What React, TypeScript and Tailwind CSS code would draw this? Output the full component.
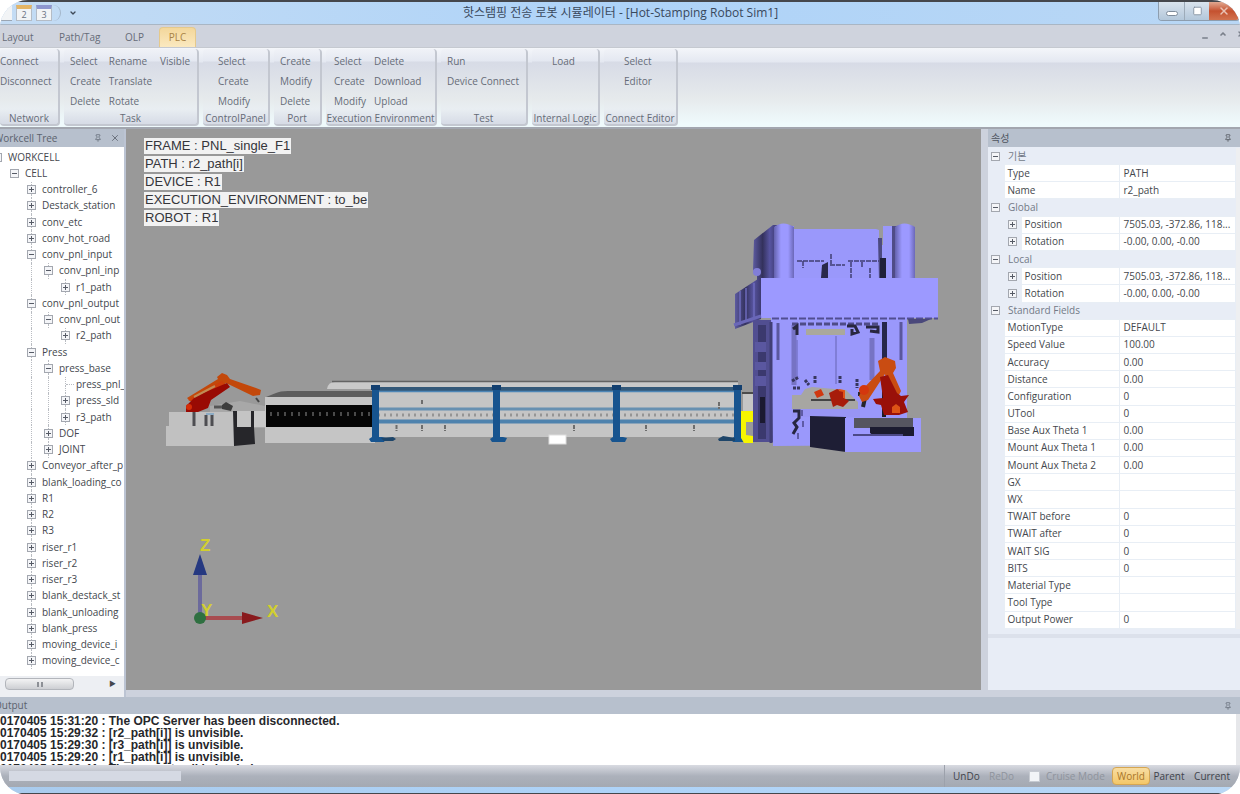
import { Pin, X, Minus, Square, ChevronDown, ChevronUp } from 'lucide-react';

interface RibbonGroupData {
  title: string;
  width: string;
  columns: string[][];
}

interface TreeNode {
  label: string;
  depth: number;
  open?: boolean;
  leaf?: boolean;
  lines?: number[];
}

interface PropertyRow {
  name: string;
  value?: string;
  kind?: 'group' | 'nested';
}

const tabs = ['Layout', 'Path/Tag', 'OLP', 'PLC'];

const ribbonGroups: RibbonGroupData[] = [
  { title: 'Network', width: 'w-[60px] pl-0', columns: [['Connect', 'Disconnect']] },
  {
    title: 'Task',
    width: 'w-[135px] pl-[6px]',
    columns: [['Select', 'Create', 'Delete'], ['Rename', 'Translate', 'Rotate'], ['Visible']],
  },
  { title: 'ControlPanel', width: 'w-[67px] pl-[15px]', columns: [['Select', 'Create', 'Modify']] },
  { title: 'Port', width: 'w-[48px] pl-[6px]', columns: [['Create', 'Modify', 'Delete']] },
  {
    title: 'Execution Environment',
    width: 'w-[111px] pl-[8px]',
    columns: [['Select', 'Create', 'Modify'], ['Delete', 'Download', 'Upload']],
  },
  { title: 'Test', width: 'w-[87px] pl-[6px]', columns: [['Run', 'Device Connect']] },
  { title: 'Internal Logic', width: 'w-[68px] pl-[20px]', columns: [['Load']] },
  { title: 'Connect Editor', width: 'w-[74px] pl-[20px]', columns: [['Select', 'Editor']] },
];

const tree: TreeNode[] = [
  { label: 'WORKCELL', depth: 0, open: true },
  { label: 'CELL', depth: 1, open: true },
  { label: 'controller_6', depth: 2 },
  { label: 'Destack_station', depth: 2 },
  { label: 'conv_etc', depth: 2 },
  { label: 'conv_hot_road', depth: 2 },
  { label: 'conv_pnl_input', depth: 2, open: true },
  { label: 'conv_pnl_inp', depth: 3, open: true, lines: [2] },
  { label: 'r1_path', depth: 4, lines: [2] },
  { label: 'conv_pnl_output', depth: 2, open: true },
  { label: 'conv_pnl_out', depth: 3, open: true, lines: [2] },
  { label: 'r2_path', depth: 4, lines: [2] },
  { label: 'Press', depth: 2, open: true },
  { label: 'press_base', depth: 3, open: true, lines: [2] },
  { label: 'press_pnl_', depth: 4, leaf: true, lines: [2, 3] },
  { label: 'press_sld', depth: 4, lines: [2, 3] },
  { label: 'r3_path', depth: 4, lines: [2, 3] },
  { label: 'DOF', depth: 3, lines: [2] },
  { label: 'JOINT', depth: 3, lines: [2] },
  { label: 'Conveyor_after_p', depth: 2 },
  { label: 'blank_loading_co', depth: 2 },
  { label: 'R1', depth: 2 },
  { label: 'R2', depth: 2 },
  { label: 'R3', depth: 2 },
  { label: 'riser_r1', depth: 2 },
  { label: 'riser_r2', depth: 2 },
  { label: 'riser_r3', depth: 2 },
  { label: 'blank_destack_st', depth: 2 },
  { label: 'blank_unloading', depth: 2 },
  { label: 'blank_press', depth: 2 },
  { label: 'moving_device_i', depth: 2 },
  { label: 'moving_device_c', depth: 2 },
];

const properties: PropertyRow[] = [
  { name: '기본', kind: 'group' },
  { name: 'Type', value: 'PATH' },
  { name: 'Name', value: 'r2_path' },
  { name: 'Global', kind: 'group' },
  { name: 'Position', value: '7505.03, -372.86, 118...', kind: 'nested' },
  { name: 'Rotation', value: '-0.00, 0.00, -0.00', kind: 'nested' },
  { name: 'Local', kind: 'group' },
  { name: 'Position', value: '7505.03, -372.86, 118...', kind: 'nested' },
  { name: 'Rotation', value: '-0.00, 0.00, -0.00', kind: 'nested' },
  { name: 'Standard Fields', kind: 'group' },
  { name: 'MotionType', value: 'DEFAULT' },
  { name: 'Speed Value', value: '100.00' },
  { name: 'Accuracy', value: '0.00' },
  { name: 'Distance', value: '0.00' },
  { name: 'Configuration', value: '0' },
  { name: 'UTool', value: '0' },
  { name: 'Base Aux Theta 1', value: '0.00' },
  { name: 'Mount Aux Theta 1', value: '0.00' },
  { name: 'Mount Aux Theta 2', value: '0.00' },
  { name: 'GX' },
  { name: 'WX' },
  { name: 'TWAIT before', value: '0' },
  { name: 'TWAIT after', value: '0' },
  { name: 'WAIT SIG', value: '0' },
  { name: 'BITS', value: '0' },
  { name: 'Material Type' },
  { name: 'Tool Type' },
  { name: 'Output Power', value: '0' },
];

const overlayLabels = [
  'FRAME : PNL_single_F1',
  'PATH : r2_path[i]',
  'DEVICE : R1',
  'EXECUTION_ENVIRONMENT : to_be',
  'ROBOT : R1',
];

const logLines = [
  '0170405 15:31:20 : The OPC Server has been disconnected.',
  '0170405 15:29:32 : [r2_path[i]] is unvisible.',
  '0170405 15:29:30 : [r3_path[i]] is unvisible.',
  '0170405 15:29:20 : [r1_path[i]] is unvisible.',
  '0170405 15:28:41 : The current cell is loaded.',
];

function ExpandBox({ open }: { open?: boolean }) {
  return (
    <svg viewBox="0 0 9 9" className="w-[9px] h-[9px]" shapeRendering="crispEdges">
      <rect x="0.5" y="0.5" width="8" height="8" fill="#f4f5f8" stroke="#a3a7af" />
      <path d={open ? 'M2 4.5h5' : 'M2 4.5h5M4.5 2v5'} stroke="#565b66" />
    </svg>
  );
}

function TitleBar() {
  return (
    <header className="relative flex h-[25px] shrink-0 items-center border-t-2 border-[#45474c] bg-gradient-to-r from-[#c4dcf4] via-[#aed3f8] to-[#b9d7f5] border-b border-b-[#a9b6c4]">
      <div className="flex items-center gap-1 rounded-r-full border-r border-[#a3b6ca] pr-2">
        <button aria-label="New" className="h-4 w-3 border-b border-[#9ba6b3] bg-[#f2f4f6]" />
        <button aria-label="Open" className="h-4 w-4 border border-t-4 border-[#b4bcc6] border-t-[#e4b566] bg-[#f2f4f6] text-[9px] leading-[10px] text-gray-500">2</button>
        <button aria-label="Save" className="h-4 w-4 border border-t-4 border-[#b4bcc6] border-t-[#8d96cf] bg-[#f2f4f6] text-[9px] leading-[10px] text-gray-500">3</button>
      </div>
      <button aria-label="Customize" className="ml-2">
        <ChevronDown className="h-2 w-2 text-[#3f4a58]" strokeWidth={4} />
      </button>
      <h1 className="flex-1 pl-[6px] text-center text-[12px] leading-[16px] text-[#39485c]">
        핫스탬핑 전송 로봇 시뮬레이터 - [Hot-Stamping Robot Sim1]
      </h1>
      <div className="flex h-[19px] self-start overflow-hidden rounded-b border border-t-0 border-[#8d9dae]">
        <button aria-label="Minimize" className="flex w-[26px] items-center justify-center border-r border-[#9dabb9] bg-gradient-to-b from-[#d9e3ed] to-[#b3c7da]">
          <span className="mt-1 h-[5px] w-[12px] rounded-sm border border-[#7e8c9b] bg-white" />
        </button>
        <button aria-label="Restore" className="flex w-[24px] items-center justify-center bg-gradient-to-b from-[#d9e3ed] to-[#b3c7da]">
          <Square className="h-[10px] w-[11px] fill-white text-[#7e8c9b]" />
        </button>
        <button aria-label="Close" className="flex w-[30px] items-center justify-center bg-gradient-to-b from-[#e0a891] via-[#c4512f] to-[#d2724f]">
          <X className="h-3 w-3 text-[#e9c2b4]" strokeWidth={3} />
        </button>
      </div>
    </header>
  );
}

function TabBar() {
  return (
    <nav className="flex h-[23px] shrink-0 items-end justify-between border-b border-[#c5c9d0] bg-[#cfd3dd] pl-[2px] text-[10px] text-[#666c78]">
      <div className="flex h-[20px]">
        {tabs.map((tab) => (
          <button
            key={tab}
            className={
              tab === 'PLC'
                ? 'w-[37px] rounded-t border border-b-0 border-[#e5c98c] bg-gradient-to-b from-[#f3d79b] to-[#fbe9c0] text-[#a98345]'
                : tab === 'Layout'
                  ? 'w-[57px] text-left'
                  : tab === 'Path/Tag'
                    ? 'w-[66px] text-left'
                    : 'w-[34px] text-left'
            }
          >
            {tab}
          </button>
        ))}
      </div>
      <div className="-mr-[5px] flex gap-2 self-center text-[#7a808b]">
        <Minus className="mt-1 h-2 w-2" strokeWidth={4} />
        <ChevronUp className="h-2 w-3" strokeWidth={5} />
        <X className="h-2 w-2" strokeWidth={4} />
      </div>
    </nav>
  );
}

function Ribbon() {
  return (
    <div className="flex h-[81px] shrink-0 gap-[4px] overflow-hidden border-b-2 border-[#a2a6af] bg-[linear-gradient(#f4f6fa_0,#e4e8f1_14px,#d7dbe6_15px,#e6eaec_50px,#effafc_76px)] pt-[1px] text-[10px] leading-[20px] text-[#666c78]">
      {ribbonGroups.map((group) => (
        <section
          key={group.title}
          className={`${group.width} relative flex h-[77px] shrink-0 flex-col rounded-sm border-r-2 border-b-2 border-[#c3c7d0] bg-[linear-gradient(#f0f2f7_0,#e4e8f1_12px,#d7dbe6_13px,#e6eaec_50px,#e9eef2_60px,#d5dae5_76px)]`}
        >
          <div className="flex h-[61px] gap-2 pt-[2px]">
            {group.columns.map((column) => (
              <div key={column[0]} className="flex flex-col items-start">
                {column.map((item) => (
                  <button key={item} className="h-[20px] whitespace-nowrap">{item}</button>
                ))}
              </div>
            ))}
          </div>
          <h2 className="absolute inset-x-0 bottom-0 h-[14px] whitespace-nowrap text-center leading-[16px]">{group.title}</h2>
        </section>
      ))}
    </div>
  );
}

function WorkcellTree() {
  return (
    <aside className="flex w-[126px] shrink-0 flex-col overflow-hidden border-r-2 border-[#bcc4d3] bg-white text-[10px] text-[#44474d]">
      <div className="flex h-[18px] shrink-0 items-center bg-[#b7c0cd] text-[#5b626e]">
        <h2 className="-ml-[6px] flex-1 whitespace-nowrap">Workcell Tree</h2>
        <button aria-label="Pin tree" className="mr-2"><Pin className="h-2 w-2" /></button>
        <button aria-label="Close tree" className="mr-1"><X className="h-[10px] w-[10px]" /></button>
      </div>
      <ul className="-ml-[11px] grid flex-1 auto-rows-fr pt-[2px]">
        {tree.map((node) => (
          <li key={node.label} className="flex items-stretch">
            {Array.from({ length: node.depth }, (_, level) => (
              <span key={level} className="flex w-[17px] shrink-0 justify-center">
                {node.lines?.includes(level) && <span className="border-l border-dotted border-[#b9bcc2]" />}
              </span>
            ))}
            <span className="flex w-[17px] shrink-0 flex-col items-center">
              <span className={node.depth < 2 ? 'flex-1' : 'flex-1 border-l border-dotted border-[#b9bcc2]'} />
              {node.leaf ? (
                <span className="w-2 self-end border-t border-dotted border-[#b9bcc2]" />
              ) : (
                <button aria-label={`Toggle ${node.label}`}><ExpandBox open={node.open} /></button>
              )}
              <span className={node.depth < 2 ? 'flex-1' : 'flex-1 border-l border-dotted border-[#b9bcc2]'} />
            </span>
            <span className="self-center whitespace-nowrap pl-[2px] leading-[15px]">{node.label}</span>
          </li>
        ))}
      </ul>
      <div className="mt-[7px] flex h-[21px] shrink-0 items-start bg-[#edeff3] pl-[5px]">
        <div className="mt-[2px] flex h-[12px] w-[69px] items-center justify-center rounded-sm border border-[#b2b5bb] bg-gradient-to-b from-[#f3f3f4] to-[#cdcfd3]">
          <span className="h-[5px] w-[6px] border-x-2 border-[#8d9096]" />
        </div>
        <span className="ml-auto mr-2 text-[7px] leading-[15px]">▶</span>
      </div>
    </aside>
  );
}

function FencePost({ x }: { x: number }) {
  return (
    <g fill="#17548f">
      <rect x={x - 3} y="386" width="7" height="55" />
      <rect x={x - 4} y="385" width="9" height="5" fill="#123f70" />
      <path d={`M${x - 6} 439l3-2h10l4 1-2 4h-13z`} />
    </g>
  );
}

function Scene() {
  return (
    <svg viewBox="126 129 855 561" className="block h-full w-full" role="img" aria-label="Robot cell">
      <defs>
        <linearGradient id="cylinder">
          <stop offset="0" stopColor="#6462ad" />
          <stop offset="0.35" stopColor="#9c99ff" />
          <stop offset="0.7" stopColor="#9c99ff" />
          <stop offset="1" stopColor="#6b68b8" />
        </linearGradient>
        <linearGradient id="side">
          <stop offset="0" stopColor="#5c5aa0" />
          <stop offset="0.4" stopColor="#33315c" />
          <stop offset="0.7" stopColor="#5754a0" />
          <stop offset="1" stopColor="#3d3a70" />
        </linearGradient>
      </defs>

      {/* conveyor line */}
      <path d="M327 389q1-7 8-7h403v8z" fill="#c9c9c9" />
      <path d="M332 381.500h406" stroke="#636363" strokeWidth="1.500" />
      <path d="M266 397l10-4q4-2 12-2h87v7z" fill="#5d5d5d" />
      <rect x="265" y="397" width="110" height="46" fill="#c5c5c5" />
      <rect x="266" y="405" width="109" height="22" fill="#060606" />
      <path d="M270 414h103" stroke="#4a4a4a" strokeWidth="4" strokeDasharray="2 5" />
      <rect x="375" y="391" width="363" height="46" fill="#c5c5c5" />
      <path d="M378 389h360" stroke="#345979" strokeWidth="4" />
      <path d="M378 391.500h360" stroke="#4e86b6" strokeWidth="1.500" />
      <path d="M378 409h360" stroke="#6790b1" strokeWidth="3" />
      <path d="M378 415h358" stroke="#959595" strokeWidth="3" strokeDasharray="2 4" />
      <path d="M378 421.500h360" stroke="#4e82ad" strokeWidth="4" />
      <path d="M396.500 425v6M422 425v6M445 425v6M574 425v6M646 425v6M694 425v6M422 400v5M719 402v7" stroke="#6d6d6d" strokeWidth="2" strokeDasharray="4 1" />
      <FencePost x={375} />
      <FencePost x={496} />
      <FencePost x={616} />
      <FencePost x={737} />
      <path d="M381 438l12-1 3 2-3 2h-9zM718 439l5-3 12 2v3h-16z" fill="#1e4569" />
      <rect x="549" y="435" width="17" height="9" fill="#fff" stroke="#ddd" />
      <rect x="743" y="393" width="10" height="19" fill="#c5c5c5" />
      <path d="M742 393h12" stroke="#4c4c4c" strokeWidth="2" />

      {/* left robot and its base */}
      <path d="M169 412h65v14h-2v20h-66v-20h3z" fill="#c1c1c1" />
      <path d="M210 406l30-5 25 5v22h-32l-23-16z" fill="#a8a8a8" />
      <path d="M210 412h24v34h-24z" fill="#c1c1c1" />
      <path d="M234 411h31v16h-31z" fill="#c9c9c9" />
      <path d="M233 411h4v16h14v-16h3v16l1 17-21 2z" fill="#26262a" />
      <path d="M237 411h14v16h-14z" fill="#c4c4c4" />
      <path d="M194 411v15M206 415v11M212 415v11" stroke="#4e4e52" strokeWidth="3" />
      <path d="M206 414h8" stroke="#8cabc4" strokeWidth="2" />
      <path d="M222 405l4-3 7 4-2 5-9-2z" fill="#3d3d3d" />
      <path d="M214 407h8" stroke="#555" strokeWidth="3" />
      <path d="M218 379l-1-2 5-4 5 2 3 4 26 9 5 2-1 5-7 1-27-13-5 4-31 14-3-3z" fill="#c3480a" />
      <path d="M188 400l34-19 5 6-30 17z" fill="#cc3e0b" />
      <path d="M186 406l10-10 31-13 3 4-19 13-3 8-10 4h-12z" fill="#990a03" />
      <path d="M194 397l21-11" stroke="#c08b55" strokeWidth="2" />
      <circle cx="189" cy="407" r="3" fill="#d52c07" />
      <path d="M256 398l3 4" stroke="#444" strokeWidth="2" />

      {/* press */}
      <path d="M754 240l19-15h4v55h-20v-7l-4-3z" fill="url(#side)" />
      <circle cx="757" cy="272" r="4" fill="#817ed8" />
      <rect x="775" y="226" width="127" height="54" fill="#9a98fb" />
      <path d="M876 225h7v20h-4v-15l-3-1z" fill="#9a9a9a" />
      <path d="M794 225h84v4h-84z" fill="#999" />
      <path d="M878 238h4v20h4v22h-7z" fill="#4c4a80" />
      <path d="M892 226h5v54h-5z" fill="#4f4c87" />
      <path d="M774 227q9-7 20 0v53h-20z" fill="url(#cylinder)" />
      <path d="M895 227q9-7 20 0v53h-20z" fill="url(#cylinder)" />
      <path d="M797 261h27M830 265h15M848 261h31M851 262v16M831 254v10M803 261v7M862 262v6M870 268v10" stroke="#403e73" strokeWidth="1.500" strokeDasharray="5 1" fill="none" />
      <path d="M822 265l6-3v16h-7z" fill="#2a294b" />
      <path d="M880 258h6v20h-6z" fill="#20203a" />
      <path d="M735 294l26-17v42l-26 10z" fill="url(#side)" />
      <path d="M740 291v34M746 288v34M754 283v35" stroke="#6e6bbd" strokeWidth="1.500" />
      <rect x="753" y="320" width="21" height="122" fill="#514e91" />
      <path d="M758 325h8v114h-8z" fill="#3b396e" />
      <path d="M755 342h11v10h-11zM755 362h11v8h-11zM755 376h11v10h-11z" fill="#5a57a0" />
      <path d="M760 397h5v26h-5z" fill="#1b1a30" />
      <path d="M771 317h136v128l-134 1z" fill="#9a98fb" />
      <path d="M771 322v121" stroke="#413e75" strokeWidth="3" />
      <path d="M778 323v37M901 322v38" stroke="#5a579d" strokeWidth="3" />
      <path d="M794 325v60M872 338v42" stroke="#7673c4" strokeWidth="5" />
      <path d="M797 340v40M836 336v48" stroke="#7875cc" strokeWidth="1.500" />
      <path d="M792 324h87" stroke="#4e4b87" strokeWidth="3" strokeDasharray="6 2" />
      <path d="M793 329l4-3v9M847 326h8l3 6-6 2v-5M866 327h12v5l-8-1" fill="none" stroke="#28273f" strokeWidth="3" />
      <path d="M806 329h39v6h-39z" fill="#aaa89c" />
      <path d="M882 322h5v47h-5z" fill="#26264a" />
      <path d="M792 381l7-4M793 388h7M805 380l4 5M815 376v7M840 376v7M857 379v9" stroke="#37365e" strokeWidth="3" strokeDasharray="3 1" />
      <path d="M792 395h9l4-6 7-2 34 3 12 12v7h-66z" fill="#a7a6a2" />
      <path d="M811 400h44" stroke="#444" strokeWidth="2" />
      <path d="M814 392l7-3 3 6-7 3z" fill="#d03810" />
      <path d="M829 393l8-4 7 2v7l5 3-6 6-6-2-4 2z" fill="#a71c0b" />
      <path d="M839 390l5 1v7" stroke="#e15319" strokeWidth="2" fill="none" />
      <path d="M792 409h68v8h-68z" fill="#9895f5" />
      <path d="M793 411h6v7l-5 5 3 4-4 7" stroke="#262641" strokeWidth="3" fill="none" />
      <path d="M802 410v6M803 421v6M798 439v-6" stroke="#5e5ba6" strokeWidth="2" />
      <rect x="761" y="278" width="177" height="40" fill="#9c99ff" />
      <path d="M772 318.500h166" stroke="#514e91" strokeWidth="2" strokeDasharray="7 2" />
      <path d="M908 319h23l-9 4-13 1z" fill="#4a487b" />
      <path d="M734 325l27-9" stroke="#6a67b8" strokeWidth="3" />

      {/* yellow gate */}
      <path d="M741 411h12v11h-7v13l7 1v7h-9l-3-5z" fill="#f6f500" />

      {/* right base */}
      <path d="M810 416l36 1v35l-36-5z" fill="#1e1e35" />
      <path d="M845 418h76v34h-76z" fill="#9c99ff" />
      <path d="M854 418h59v10h-59z" fill="#555560" />
      <path d="M870 427h44v9h-40l-4-3z" fill="#1b1b30" />
      <path d="M853 435h50" stroke="#4c4987" strokeWidth="2" />

      {/* right robot */}
      <path d="M884 383v34" stroke="#1c1c26" strokeWidth="4" />
      <path d="M862 396l3 2-2 9M858 394h6" stroke="#26262c" strokeWidth="4" fill="none" />
      <path d="M880 371l-2-10 7-4 10 4 1 7-3 5 8 18-4 8-7 2-5-27-17 26-6 2-3-6 3-6z" fill="#c94c12" />
      <path d="M880 377l8-2 9 18 4 3 8-1-5 7 4 10-9 3h-15l-3-10-5-1-3-5 10-1z" fill="#991009" />
      <path d="M892 407l4-3 4 3v6h-8z" fill="#dd5316" />
      <circle cx="864" cy="390" r="5" fill="#d4370e" />

      {/* axis triad */}
      <g fontFamily="Liberation Sans, sans-serif" fontSize="17" fontWeight="bold" fill="#d2cf2e">
        <path d="M200 614v-39" stroke="#6c6a9c" strokeWidth="4" />
        <path d="M200 554l7 21h-14z" fill="#263981" />
        <path d="M204 618h40" stroke="#a84c50" strokeWidth="4" />
        <path d="M263 618l-21-6v12z" fill="#891a1d" />
        <circle cx="200" cy="618" r="6" fill="#2f7041" />
        <text x="200" y="551">Z</text>
        <text x="201" y="616">Y</text>
        <text x="267" y="617">X</text>
      </g>
    </svg>
  );
}

function Viewport() {
  return (
    <main className="relative min-w-0 flex-1 bg-[#999]">
      <Scene />
      <div className="absolute left-[18px] top-[9px] flex flex-col items-start gap-[2px] font-['Liberation_Sans',sans-serif] text-[13px] text-[#35353a]">
        {overlayLabels.map((label) => (
          <span key={label} className="bg-[#f2f2f2] px-[1px] leading-[16px]">{label}</span>
        ))}
      </div>
    </main>
  );
}

function PropertiesPanel() {
  return (
    <aside className="flex w-[259px] shrink-0 flex-col border-l-[7px] border-[#cdd2dd] bg-[#e8edf6] text-[10px] text-[#44474d]">
      <div className="flex h-[18px] shrink-0 items-center bg-[#b7c0cd] pl-[3px]">
        <h2 className="flex-1 text-[#4d535e]">속성</h2>
        <Pin className="mr-2 h-2 w-2" />
      </div>
      <div className="flex border-b-4 border-[#dce1eb] pt-[1px] pb-[5px]">
        <table className="h-[481px] flex-1 table-fixed border-collapse">
          <colgroup>
            <col className="w-[16px]" />
            <col className="w-[17px]" />
            <col className="w-[98px]" />
            <col />
          </colgroup>
          <tbody>
            {properties.map((row, index) => (
              <tr key={index} className="leading-[15px]">
                {row.kind === 'group' ? (
                  <>
                    <td className="p-0 pl-[3px]">
                      <button aria-label={`Toggle ${row.name}`} className="block"><ExpandBox open /></button>
                    </td>
                    <th colSpan={3} className="p-0 pl-[4px] text-left font-normal text-[#737a87]">{row.name}</th>
                  </>
                ) : (
                  <>
                    <td className="p-0" />
                    {row.kind === 'nested' && (
                      <td className="p-0 pl-[4px]">
                        <button aria-label={`Expand ${row.name}`} className="block"><ExpandBox /></button>
                      </td>
                    )}
                    <th
                      colSpan={row.kind === 'nested' ? 1 : 2}
                      className="whitespace-nowrap border border-[#e8eef5] bg-white p-0 pl-[3px] text-left font-normal"
                    >
                      {row.name}
                    </th>
                    <td className="whitespace-nowrap border border-[#e8eef5] bg-white p-0 pl-[4px]">{row.value}</td>
                  </>
                )}
              </tr>
            ))}
          </tbody>
        </table>
        <div className="w-[4px] shrink-0 bg-[#eeeff1]" />
      </div>
      <div className="flex-1 border-b-[7px] border-[#cdd2dd]" />
    </aside>
  );
}

function OutputPanel() {
  return (
    <section className="shrink-0">
      <div className="flex h-[17px] items-center bg-[#b7c0cd] text-[10px] text-[#5b626e]">
        <h2 className="-ml-[6px] flex-1">Output</h2>
        <Pin className="mr-2 h-2 w-2" />
      </div>
      <div className="flex h-[51px] overflow-hidden bg-white">
        <div className="flex-1 pt-[1px] font-['Liberation_Sans',sans-serif] text-[12px] leading-[12px] font-bold text-[#26272b]">
          {logLines.map((line) => (
            <p key={line}>{line}</p>
          ))}
        </div>
        <div className="w-[4px] bg-[#e6e7ea]" />
      </div>
    </section>
  );
}

function StatusBar() {
  return (
    <footer className="flex h-[22px] shrink-0 items-center bg-gradient-to-b from-[#d9dbe2] via-[#acb1bb] to-[#a4a9b2] pl-[9px] pr-[10px] text-[10px] text-[#3f434b]">
      <div className="h-[10px] w-[172px] bg-[#d5d9e3]" />
      <div className="ml-auto flex h-full items-center border-l border-[#9ca1ab] pl-2">
        <button className="w-[36px] text-left">UnDo</button>
        <button className="w-[40px] text-left text-[#8f949d]" disabled>ReDo</button>
        <label className="flex w-[83px] items-center gap-[6px] whitespace-nowrap text-[#8f949d]">
          <input type="checkbox" defaultChecked disabled className="h-[11px] w-[11px] appearance-none border border-[#c6cad1] bg-[#f2f4f7]" />
          Cruise Mode
        </label>
        <button className="h-[18px] w-[38px] rounded-sm border border-[#d5a653] bg-gradient-to-b from-[#f8dda2] to-[#f3c768] text-[#a8762b]">World</button>
        <button className="w-[38px]">Parent</button>
        <button className="w-[42px] text-right">Current</button>
      </div>
    </footer>
  );
}

export default function App() {
  return (
    <div className="bg-white">
      <div className="flex min-h-screen flex-col overflow-hidden rounded-[28px] bg-[#cdd2dd] font-['Open_Sans','Noto_Sans_CJK_KR',sans-serif]">
        <TitleBar />
        <TabBar />
        <Ribbon />
        <div className="flex flex-1">
          <WorkcellTree />
          <div className="flex min-w-0 flex-1 border-b-[7px] border-[#cdd2dd]">
            <Viewport />
          </div>
          <PropertiesPanel />
        </div>
        <OutputPanel />
        <StatusBar />
        <div className="h-[8px] shrink-0 border-b-2 border-[#45474c] bg-gradient-to-r from-[#a9cbed] via-[#aed3f8] to-[#b9d7f5]" />
      </div>
    </div>
  );
}
